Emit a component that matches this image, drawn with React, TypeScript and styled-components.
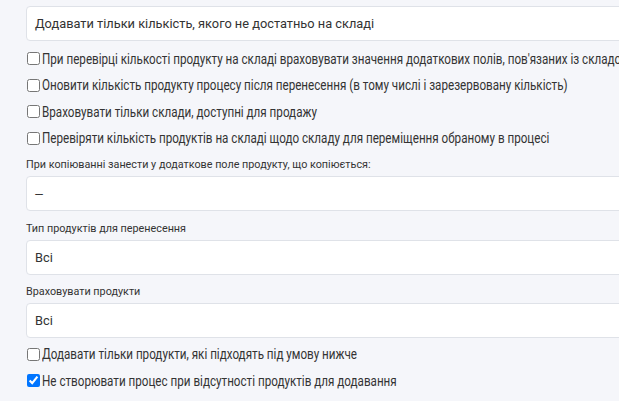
import React from "react";
import styled, { createGlobalStyle } from "styled-components";

const Global = createGlobalStyle`
  html, body { margin: 0; padding: 0; background: #f5f6fa; overflow: hidden; }
  body { font-family: Roboto, "Noto Sans", Arial, sans-serif; color: #333; }
`;

const Page = styled.div`
  padding: 6px 0 0 26px;
  width: 760px;
  display: flex;
  flex-direction: column;
`;

const Field = styled.div`
  box-sizing: border-box;
  height: 35px;
  width: 720px;
  background: #fff;
  border: 1px solid #dfe2e8;
  border-radius: 4px;
  display: flex;
  align-items: center;
  padding: 0 9px 0 8px;
  font-size: 12.8px;
  color: #333;
  white-space: nowrap;
`;

const Dash = styled.span`
  font-size: 12px;
  letter-spacing: -1px;
`;

const CheckRow = styled.label<{ $mt: number }>`
  display: flex;
  align-items: center;
  height: 20px;
  margin-top: ${(p) => p.$mt}px;
  white-space: nowrap;
`;

const CheckText = styled.span`
  display: inline-block;
  font-size: 14px;
  color: #333;
  transform: scaleX(0.832);
  transform-origin: left center;
`;

const Box = styled.input`
  width: 13px;
  height: 13px;
  margin: 0 2px 0 1px;
  flex-shrink: 0;
`;

const Label = styled.div<{ $mt: number }>`
  font-size: 10.8px;
  line-height: 16px;
  color: #333;
  margin-top: ${(p) => p.$mt}px;
  margin-bottom: 3px;
  white-space: nowrap;
`;

const Check = ({ mt, checked, children }: { mt: number; checked?: boolean; children: React.ReactNode }) => (
  <CheckRow $mt={mt}>
    <Box type="checkbox" defaultChecked={checked} />
    <CheckText>{children}</CheckText>
  </CheckRow>
);

export default function App() {
  return (
    <>
      <Global />
      <Page>
        <Field>Додавати тільки кількість, якого не достатньо на складі</Field>
        <Check mt={7.5}>
          При перевірці кількості продукту на складі враховувати значення додаткових полів, пов'язаних із складом
        </Check>
        <Check mt={6.5}>
          Оновити кількість продукту процесу після перенесення (в тому числі і зарезервовану кількість)
        </Check>
        <Check mt={6.5}>Враховувати тільки склади, доступні для продажу</Check>
        <Check mt={6.5}>
          Перевіряти кількість продуктів на складі щодо складу для переміщення обраному в процесі
        </Check>
        <Label $mt={9}>При копіюванні занести у додаткове поле продукту, що копіюється:</Label>
        <Field>
          <Dash>---</Dash>
        </Field>
        <Label $mt={9.5}>Тип продуктів для перенесення</Label>
        <Field>Всі</Field>
        <Label $mt={9.5}>Враховувати продукти</Label>
        <Field>Всі</Field>
        <Check mt={6}>Додавати тільки продукти, які підходять під умову нижче</Check>
        <Check mt={6.8} checked>
          Не створювати процес при відсутності продуктів для додавання
        </Check>
      </Page>
    </>
  );
}
